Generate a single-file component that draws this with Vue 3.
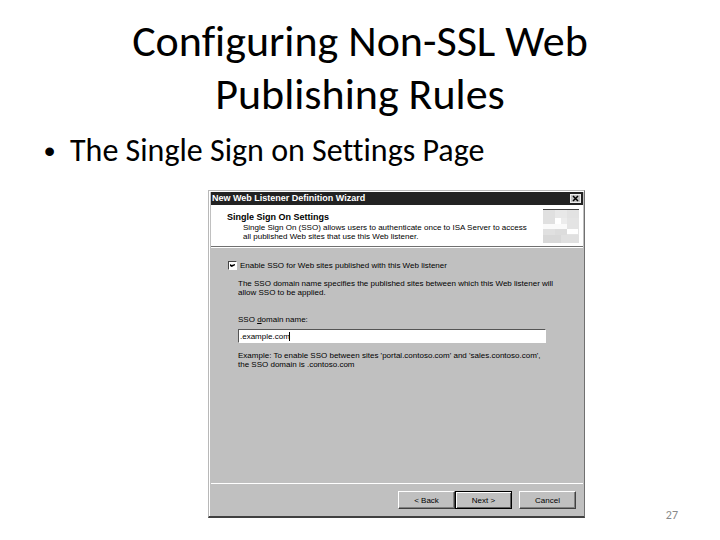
<template>
  <main class="slide">
    <h1>Configuring Non-SSL Web<br />Publishing Rules</h1>
    <ul class="points">
      <li>The Single Sign on Settings Page</li>
    </ul>

    <section class="stage">
      <form class="wizard" @submit.prevent>
        <div class="titlebar">
          <span>New Web Listener Definition Wizard</span>
          <button type="button" class="close" aria-label="Close">
            <svg viewBox="0 0 7 7" width="7" height="7">
              <path d="M1 1L6 6M6 1L1 6" stroke="#000" stroke-width="1.5" />
            </svg>
          </button>
        </div>

        <header class="banner">
          <div class="intro">
            <h2>Single Sign On Settings</h2>
            <p>Single Sign On (SSO) allows users to authenticate once to ISA Server to access<br />all published Web sites that use this Web listener.</p>
          </div>
          <svg class="logo" viewBox="0 0 36 34" width="36" height="34">
            <rect width="36" height="34" fill="#e4e4e4" />
            <rect y="1" width="12" height="14" fill="#e0e0e0" />
            <rect x="12" y="1" width="12" height="8" fill="#e8e8e8" />
            <rect x="24" y="1" width="12" height="8" fill="#e2e2e2" />
            <rect x="12" y="9" width="6" height="6" fill="#fff" />
            <rect x="18" y="9" width="6" height="6" fill="#ececec" />
            <rect y="15" width="24" height="5" fill="#fafafa" />
            <rect x="24" y="20" width="11" height="5" fill="#fff" />
            <rect y="20" width="12" height="6" fill="#e0e0e0" />
            <rect x="12" y="20" width="12" height="6" fill="#dcdcdc" />
            <rect y="26" width="18" height="8" fill="#d8d8d8" />
            <rect x="18" y="26" width="18" height="8" fill="#e0e0e0" />
            <rect width="36" height="1" fill="#444" />
          </svg>
        </header>

        <div class="content">
          <label class="check">
            <input v-model="enabled" type="checkbox" />
            <span>Enable SSO for Web sites published with this Web listener</span>
          </label>
          <div class="fields">
            <p>The SSO domain name specifies the published sites between which this Web listener will<br />allow SSO to be applied.</p>
            <label class="name" for="domain">SSO <u>d</u>omain name:</label>
            <div class="entry">
              <input id="domain" v-model="domain" type="text" />
              <span class="caret"></span>
            </div>
            <p>Example: To enable SSO between sites 'portal.contoso.com' and 'sales.contoso.com',<br />the SSO domain is .contoso.com</p>
          </div>
        </div>

        <footer class="actions">
          <button type="button">&lt; Back</button>
          <button type="submit" class="default">Next &gt;</button>
          <button type="button" class="cancel">Cancel</button>
        </footer>
      </form>
    </section>

    <div class="page-number">27</div>
  </main>
</template>

<script setup>
import { ref } from 'vue';

const enabled = ref(true);
const domain = ref('.example.com');
</script>

<style>
body {
  margin: 0;
  background: #fff;
}
</style>

<style scoped>
* {
  box-sizing: border-box;
}

.slide {
  padding-top: 15px;
  color: #000;
  font-family: Carlito, Calibri, Lato, sans-serif;
  font-variant-ligatures: none;
}

h1 {
  margin: 0;
  font-size: 44px;
  font-weight: 400;
  line-height: 53px;
  text-align: center;
}

.points {
  margin: 11px 0 0;
  padding: 0 0 0 44px;
  list-style: none;
  font-size: 32px;
  line-height: 38px;
}

.points li {
  display: flex;
}

.points li::before {
  content: '•';
  width: 26px;
  font-family: "Liberation Sans", sans-serif;
}

.stage {
  margin-top: 20px;
  padding: 0 135px 0 208px;
}

.wizard {
  display: flex;
  flex-direction: column;
  min-height: 328px;
  background: #c0c0c0;
  border: 1px solid #b8b8b8;
  border-right-color: #707070;
  border-bottom: 2px solid #404040;
  box-shadow: inset 1px 1px #fff;
  padding: 1px 1px 0 2px;
  font-family: "Liberation Sans", sans-serif;
  font-size: 8px;
  line-height: 9px;
  white-space: nowrap;
}

.titlebar {
  display: flex;
  align-items: center;
  justify-content: space-between;
  height: 13px;
  padding: 0 2px 0 1px;
  background: #222;
  color: #fff;
  font-size: 9px;
  font-weight: 700;
}

.close {
  display: flex;
  align-items: center;
  justify-content: center;
  width: 11px;
  height: 9px;
  padding: 0;
  background: #c0c0c0;
  border: 1px solid #eee;
}

.banner {
  display: flex;
  justify-content: space-between;
  height: 42px;
  padding: 4px 4px 0 16px;
  background: #fff;
  border-bottom: 1px solid #707070;
}

h2 {
  margin: 4px 0 1px;
  font-size: 9px;
  line-height: 9px;
}

.intro p {
  margin: 0 0 0 16px;
}

p {
  margin: 0;
}

.content {
  flex: 1;
  padding: 13px 37px 0 17px;
  border-top: 1px solid #fff;
}

.check {
  display: flex;
  align-items: center;
  gap: 3px;
}

.check input {
  appearance: none;
  width: 9px;
  height: 9px;
  margin: 0;
  background: #fff;
  border: 1px solid #fff;
  border-top-color: #444;
  border-left-color: #444;
}

.check input:checked::before {
  content: '';
  display: block;
  width: 5px;
  height: 3px;
  margin: 2px 1px;
  background: #000;
  clip-path: polygon(0 0, 35% 35%, 100% 0, 100% 40%, 35% 100%, 0 65%);
}

.fields {
  padding: 9px 0 0 10px;
}

.name {
  display: block;
  margin-top: 18px;
}

.entry {
  display: flex;
  align-items: center;
  position: relative;
  margin: 5px 0 8px;
}

.entry input {
  width: 100%;
  height: 14px;
  padding: 0 1px;
  background: #fff;
  border: 1px solid #fff;
  border-top-color: #555;
  border-left-color: #555;
  border-radius: 0;
  color: #000;
  font: inherit;
  outline: none;
}

.caret {
  position: absolute;
  left: 51px;
  width: 1px;
  height: 9px;
  background: #000;
}

.actions {
  display: flex;
  justify-content: flex-end;
  padding: 7px;
  border-top: 1px solid #fff;
}

.actions button {
  width: 57px;
  height: 18px;
  padding: 0;
  background: #c0c0c0;
  border: 1px solid #fff;
  border-right-color: #404040;
  border-bottom-color: #404040;
  box-shadow: inset -1px -1px #808080;
  color: #000;
  font: inherit;
}

.actions .default {
  border-color: #000;
  box-shadow: inset 1px 1px #fff, inset -1px -1px #606060;
}

.actions .cancel {
  margin-left: 7px;
}

.page-number {
  margin: -10px 42px 0 0;
  color: #898989;
  font-size: 12px;
  line-height: 14px;
  text-align: right;
}
</style>
